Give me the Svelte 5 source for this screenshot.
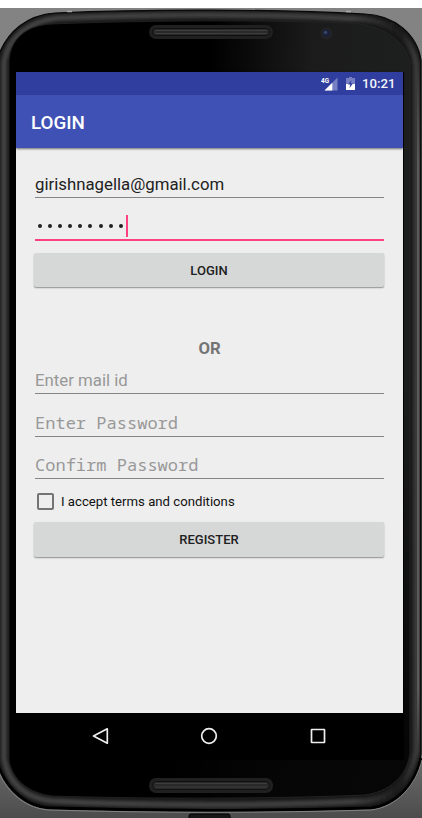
<script>
  let email = $state('girishnagella@gmail.com');
  const dots = Array.from({ length: 9 });
  const hints = [
    { text: 'Enter mail id', mono: false },
    { text: 'Enter Password', mono: true },
    { text: 'Confirm Password', mono: true }
  ];
  const outer = 'M-1 54C8 32 26 15 55 13C150 9 270 9 365 14C394 15 417 34 421 60V754C416 783 397 805 371 808C270 812 150 812 50 808C27 807 7 790 -1 768Z';
  const rim = 'M4 62C8 38 28 21 58 18C155 14 270 14 362 19C391 21 412 38 416 64V751C411 779 394 798 367 801C270 806 150 806 53 801C27 799 8 784 4 758Z';
  const glass = 'M9 60C11 38 27 25 52 24C150 20 270 20 350 23C386 25 407 43 410 64V753C407 776 390 792 364 795C270 799 150 799 52 796C29 793 12 780 9 760Z';
</script>

<main class="phone">
  <svg class="frame" viewBox="0 0 422 818" aria-hidden="true">
    <defs>
      <linearGradient id="backdrop" x1="0" y1="0" x2="0" y2="1">
        <stop offset="0" stop-color="#838383" /><stop offset="0.9" stop-color="#777" /><stop offset="1" stop-color="#4c4c4c" />
      </linearGradient>
      <linearGradient id="rim" x1="0" y1="0" x2="1" y2="0">
        <stop offset="0" stop-color="#404040" /><stop offset="0.85" stop-color="#3c3c3c" /><stop offset="0.96" stop-color="#1a1a1a" /><stop offset="1" stop-color="#3a3a3a" />
      </linearGradient>
      <linearGradient id="shine" x1="0" y1="0" x2="1" y2="0.1">
        <stop offset="0.5" stop-color="#000" /><stop offset="0.75" stop-color="#1b1b1b" /><stop offset="1" stop-color="#1d1f1e" />
      </linearGradient>
      <linearGradient id="fade" x1="0" y1="0" x2="0" y2="1">
        <stop offset="0.45" stop-color="#000" stop-opacity="0" /><stop offset="0.92" stop-color="#000" stop-opacity=".8" />
      </linearGradient>
      <linearGradient id="edge" x1="0" y1="0" x2="0" y2="1">
        <stop offset="0" stop-color="#5a5a5a" stop-opacity="0" /><stop offset="0.15" stop-color="#5a5a5a" /><stop offset="0.9" stop-color="#5a5a5a" /><stop offset="1" stop-color="#5a5a5a" stop-opacity="0" />
      </linearGradient>
      <filter id="soft"><feGaussianBlur stdDeviation="1.5" /></filter>
    </defs>
    <rect y="8" width="422" height="810" fill="url(#backdrop)" />
    <path d={outer} fill="#171717" />
    <path d={rim} fill="none" stroke="url(#rim)" stroke-width="6" filter="url(#soft)" />
    <rect x="417" y="60" width="2.500" height="700" fill="url(#edge)" />
    <path d={outer} fill="none" stroke="#080808" stroke-width="1.2" />
    <path d={glass} fill="url(#shine)" />
    <path d={glass} fill="url(#fade)" stroke="#262626" stroke-width=".8" />
    <path d="M403.500 72V760" stroke="#000" />
    <path d="M-1 768C8 790 27 807 50 808C150 811 270 811 371 808C397 805 416 783 421 758" fill="none" stroke="#000" stroke-width="3" />
    <path d="M-1 772C8 794 27 809 50 810C150 813 270 813 371 810C397 807 416 785 422 760" fill="none" stroke="#858585" stroke-width="1" />
    <path d="M67 11.500h5M346 11.500h5" stroke="#aaa" stroke-width="1.500" />
    <rect x="189" y="814" width="41" height="6" rx="2" fill="#171717" stroke="#000" />
    <g fill="#202020">
      <rect x="149" y="25" width="124" height="14" rx="7" />
      <rect x="149" y="778" width="124" height="15" rx="7" />
    </g>
    <g fill="#292929" stroke="#101010">
      <rect x="152.500" y="28.500" width="117" height="7" rx="3.500" />
      <rect x="152.500" y="781.500" width="117" height="8" rx="4" />
    </g>
    <path d="M155 30.500H267M155 33.500H267M155 783.500H267M155 787H267" stroke="#414141" stroke-width=".8" />
    <circle cx="326.500" cy="33.500" r="6" fill="#242426" />
    <circle cx="326.500" cy="33.500" r="4" fill="#1b2035" />
    <circle cx="325.500" cy="32.500" r="1.800" fill="#35456f" />
  </svg>

  <section class="screen">
    <header>
      <div class="status">
        <svg class="signal" viewBox="0 0 17 14">
          <path d="M16.500 .5V13.500H3.500Z" fill="#7780c3" />
          <path d="M11.300 5.700V13.500H3.500Z" fill="#fff" />
          <path d="M0 0H8.500V6.500H0Z" fill="#303f9f" />
          <text x="0" y="6.300" textLength="8" lengthAdjust="spacingAndGlyphs">4G</text>
        </svg>
        <svg class="battery" viewBox="0 0 9 13">
          <path d="M3 0H6V1H9V7H0V1H3Z" fill="#7780c3" />
          <path d="M0 7H9V13H0Z" fill="#fff" />
          <path d="M5.500 3L2 7.600H4.200L3.500 11L7 6.400H4.800Z" fill="#303f9f" />
        </svg>
        <time>10:21</time>
      </div>
      <h1>LOGIN</h1>
    </header>

    <form>
      <input class="field email" aria-label="Email" bind:value={email} />
      <div class="field password">
        <span class="dots">{#each dots as _}<i></i>{/each}</span><b></b>
      </div>
      <button type="button">LOGIN</button>
      <p>OR</p>
      {#each hints as hint}
        <input class="field hint" class:mono={hint.mono} placeholder={hint.text} />
      {/each}
      <label><input type="checkbox" /><span>I accept terms and conditions</span></label>
      <button type="button">REGISTER</button>
    </form>

    <nav>
      <svg viewBox="0 0 18 18"><path d="M16.300 1.800V16.200L2.500 9Z" /></svg>
      <svg viewBox="0 0 18 18"><circle cx="9" cy="9" r="7.300" /></svg>
      <svg viewBox="0 0 18 18"><rect x="2.500" y="2.500" width="13" height="13" rx=".3" /></svg>
    </nav>
  </section>
</main>

<style>
  :global(body) { margin: 0; background: #fff; }
  * { box-sizing: border-box; }
  .phone { position: relative; width: 422px; height: 818px; padding: 72px 19px 58px 16px; overflow: hidden; font-family: Roboto, sans-serif; }
  .frame { position: absolute; inset: 0; width: 422px; height: 818px; }
  .screen { position: relative; display: flex; flex-direction: column; width: 387px; height: 688px; background: #eee; }
  header { height: 76px; flex: none; background: #3f51b5; box-shadow: 0 1px 2px #0008; }
  .status { display: flex; align-items: center; justify-content: flex-end; height: 23px; padding-right: 8px; background: #303f9f; color: #f2f3fa; }
  .signal { width: 17px; height: 14px; margin-right: 8px; }
  .signal text { font: 700 8px Roboto, sans-serif; fill: #fff; }
  .battery { width: 9px; height: 13px; margin-right: 7px; }
  time { font-size: 13.200px; font-weight: 500; line-height: 24px; width: 33px; white-space: nowrap; }
  h1 { margin: 0; padding-left: 15px; font-size: 18.800px; font-weight: 500; line-height: 56px; color: #fff; }
  form { display: flex; flex-direction: column; flex: 1; padding: 19px 18px 0; }
  .field { width: 349px; height: 31px; margin: 0 0 0 1px; padding: 0; flex: none; border: 0; border-bottom: 1px solid #858585; border-radius: 0; outline: 0; background: none; font: 400 16.800px Roboto, sans-serif; color: #212121; }
  .email { padding-top: 4px; }
  .password { display: flex; align-items: center; height: 43px; padding-top: 14px; border-bottom: 2px solid #ff4081; }
  .dots { display: flex; gap: 6.200px; padding-left: 2.500px; }
  .dots i { width: 4px; height: 4px; border-radius: 50%; background: #212121; }
  .password b { width: 2px; height: 22px; margin-left: 2.500px; background: #ff4081; }
  button { width: 350px; height: 34px; flex: none; margin: 12px 0 0; padding: 0; border: 0; border-radius: 2px; background: #d6d7d7; box-shadow: 0 1px 1.500px #0006; color: #212121; font: 500 13px Roboto, sans-serif; }
  p { margin: 50px 0 0; height: 23px; line-height: 23px; text-align: center; font-size: 16.700px; font-weight: 700; color: #747474; }
  .hint { height: 34px; padding-top: 7px; margin-bottom: 8.500px; }
  .hint::placeholder { color: #989898; opacity: 1; }
  .mono { padding-top: 6px; font-family: "Noto Sans Mono", "DejaVu Sans Mono", monospace; font-size: 17.050px; }
  label { display: flex; align-items: center; height: 29px; margin-top: -1px; padding-left: 3px; font-size: 13.180px; color: #111; }
  input[type='checkbox'] { appearance: none; width: 17px; height: 17px; margin: 0 7px 0 0; border: 2px solid #747474; border-radius: 2px; }
  label + button { margin-top: 6px; height: 35px; }
  nav { display: flex; align-items: center; justify-content: center; gap: 91px; height: 47px; padding: 0 2px 2px 0; background: #000; }
  nav svg { width: 18px; height: 18px; fill: none; stroke: #eee; stroke-width: 1.700; stroke-linejoin: round; }
</style>
